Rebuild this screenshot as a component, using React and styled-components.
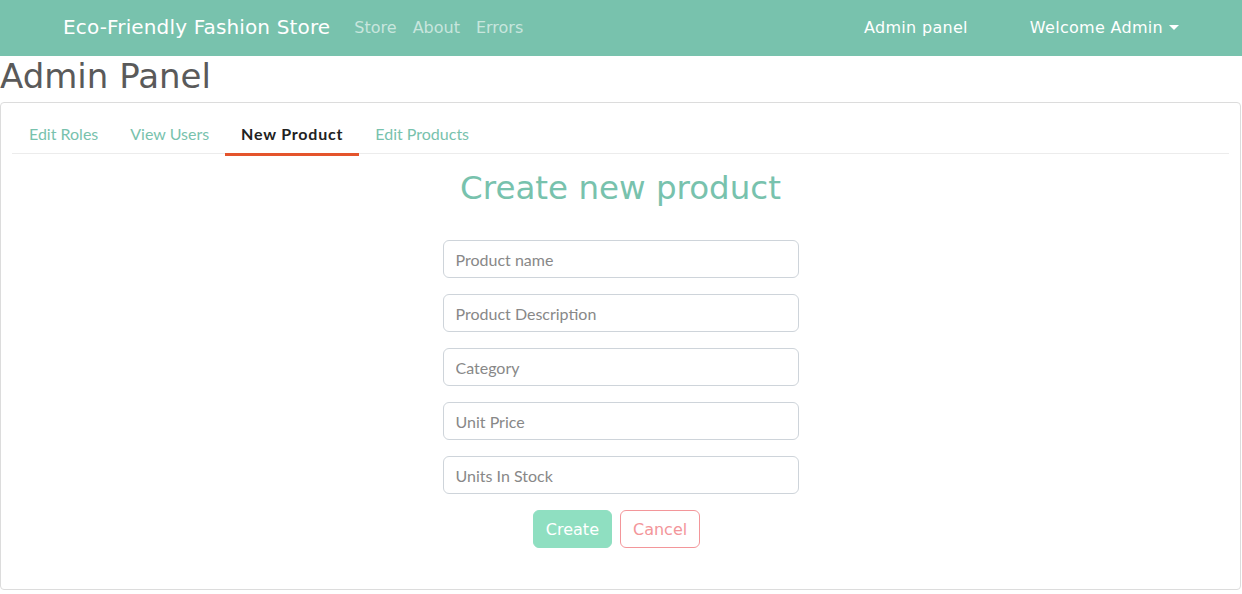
import React from 'react';
import styled, { createGlobalStyle } from 'styled-components';

const GlobalStyle = createGlobalStyle`
  html, body {
    margin: 0;
    padding: 0;
    overflow: hidden;
    background: #fff;
  }
  * {
    box-sizing: border-box;
  }
`;

const headingFont = `'DejaVu Sans', 'Open Sans', sans-serif`;
const bodyFont = `'Lato', 'Open Sans', sans-serif`;

const NavBar = styled.nav`
  height: 56px;
  background: #78c2ad;
  display: flex;
  align-items: center;
  padding: 0 63px;
  font-family: ${headingFont};
`;

const Brand = styled.a`
  color: #fff;
  font-size: 20px;
  letter-spacing: 0.15px;
  margin-right: 24px;
  margin-top: -2px;
`;

const NavLinks = styled.div`
  display: flex;
  gap: 16px;
  flex: 1;
`;

const NavLink = styled.a`
  color: ${(p) => (p.$bright ? '#fff' : 'rgba(255, 255, 255, 0.6)')};
  letter-spacing: ${(p) => (p.$bright ? '0.3px' : '0')};
  font-size: 16px;
  margin-top: -2px;
`;

const RightNav = styled.div`
  display: flex;
  align-items: center;
  gap: 62px;
`;

const Caret = styled.span`
  display: inline-block;
  margin-left: 6px;
  vertical-align: 3px;
  border-top: 5px solid #fff;
  border-left: 5px solid transparent;
  border-right: 5px solid transparent;
`;

const PageTitle = styled.h1`
  margin: 0;
  padding: 1px 0 0 0;
  height: 46px;
  font-family: ${headingFont};
  font-weight: 400;
  font-size: 34px;
  line-height: 38px;
  color: #5a5a5a;
`;

const Card = styled.div`
  margin: 0 1px 0 0;
  height: 488px;
  border: 1px solid #dcdcdc;
  border-radius: 4px;
  padding: 12px 11px 0 11px;
`;

const TabList = styled.div`
  display: flex;
  border-bottom: 1px solid #ececec;
  height: 39px;
  padding-left: 1px;
`;

const Tab = styled.button`
  border: none;
  background: none;
  padding: 0 16px 1px;
  height: 41px;
  margin-bottom: -2px;
  font-family: ${bodyFont};
  font-size: 16px;
  cursor: pointer;
  color: ${(p) => (p.$active ? '#222' : '#78c2ad')};
  font-weight: ${(p) => (p.$active ? 700 : 400)};
  letter-spacing: ${(p) => (p.$active ? '0.8px' : '0')};
  border-bottom: 3px solid ${(p) => (p.$active ? '#e4542c' : 'transparent')};
`;

const Form = styled.form`
  display: flex;
  flex-direction: column;
  align-items: center;
`;

const FormTitle = styled.h2`
  margin: 16px 0 33px;
  font-family: ${headingFont};
  font-weight: 400;
  font-size: 32.5px;
  line-height: 37px;
  color: #78c2ad;
`;

const Input = styled.input`
  width: 356px;
  height: 38px;
  margin-bottom: 16px;
  padding: 0 12px;
  border: 1px solid #ced4da;
  border-radius: 6px;
  font-family: ${bodyFont};
  font-size: 16px;
  color: #555;
  &::placeholder {
    color: #888;
  }
`;

const Buttons = styled.div`
  display: flex;
  gap: 8px;
  margin-right: 8px;
`;

const Button = styled.button`
  height: 38px;
  padding: 0 12px;
  border-radius: 6px;
  font-family: ${headingFont};
  font-size: 16px;
  border: 1px solid ${(p) => (p.$outline ? '#f3969a' : '#8fdfc1')};
  background: ${(p) => (p.$outline ? '#fff' : '#8fdfc1')};
  color: ${(p) => (p.$outline ? '#f3969a' : '#fff')};
`;

const tabs = ['Edit Roles', 'View Users', 'New Product', 'Edit Products'];
const fields = [
  'Product name',
  'Product Description',
  'Category',
  'Unit Price',
  'Units In Stock',
];

const App = () => {
  return (
    <>
      <GlobalStyle />
      <NavBar>
        <Brand>Eco-Friendly Fashion Store</Brand>
        <NavLinks>
          <NavLink>Store</NavLink>
          <NavLink>About</NavLink>
          <NavLink>Errors</NavLink>
        </NavLinks>
        <RightNav>
          <NavLink $bright>Admin panel</NavLink>
          <NavLink $bright>
            Welcome Admin
            <Caret />
          </NavLink>
        </RightNav>
      </NavBar>
      <PageTitle>Admin Panel</PageTitle>
      <Card>
        <TabList>
          {tabs.map((t) => (
            <Tab key={t} $active={t === 'New Product'}>
              {t}
            </Tab>
          ))}
        </TabList>
        <Form onSubmit={(e) => e.preventDefault()}>
          <FormTitle>Create new product</FormTitle>
          {fields.map((f) => (
            <Input key={f} placeholder={f} />
          ))}
          <Buttons>
            <Button type="submit">Create</Button>
            <Button type="button" $outline>
              Cancel
            </Button>
          </Buttons>
        </Form>
      </Card>
    </>
  );
};

export default App;
